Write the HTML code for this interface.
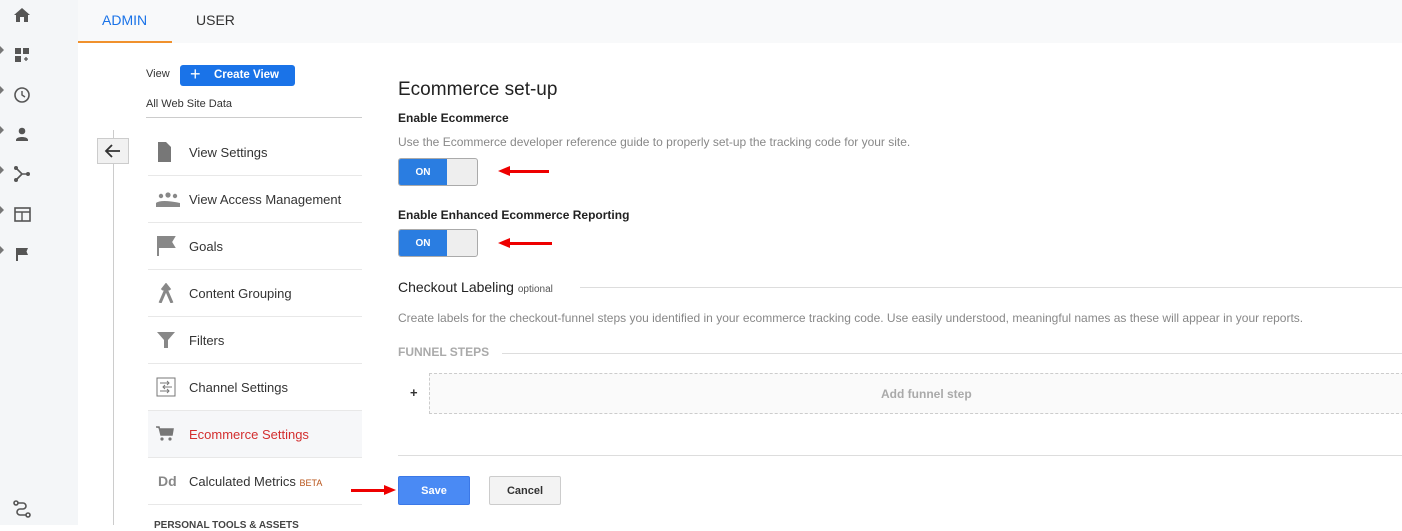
<!DOCTYPE html>
<html><head><meta charset="utf-8"><style>
*{margin:0;padding:0;box-sizing:border-box}
body{width:1402px;height:525px;overflow:hidden;background:#fff;font-family:"Liberation Sans",Arial,sans-serif;position:relative;color:#333}
.a{position:absolute}
.side{left:0;top:0;width:78px;height:525px;background:#f4f6f8}
.top{left:78px;top:0;width:1324px;height:43px;background:#f8f9fa}
.tab{top:12px;font-size:14px}
.item{left:148px;width:214px;height:47px;border-bottom:1px solid #e8e8e8;font-size:13px;color:#333}
.item span{position:absolute;left:41px;top:16px}
.item svg{position:absolute;left:8px;top:13px}
.tog{left:398px;width:80px;height:28px;border:1px solid #aaa;border-radius:3px;background:#eee;overflow:hidden}
.tog b{position:absolute;left:0;top:0;width:48px;height:28px;background:#2a7de1;color:#fff;font-size:10px;text-align:center;line-height:27px}
.arrow{height:3px;background:#e00}
.h{font-size:12px;font-weight:bold;color:#222}
.g{font-size:12px;color:#888}
</style></head><body>
<div class="a side"></div>
<svg class="a" style="left:12px;top:6px" width="20" height="260" fill="#555">
<path d="M10 2l8 7h-2v7h-4v-5H8v5H4V9H2z"/>
<rect x="3" y="42" width="6" height="6"/><rect x="11" y="42" width="6" height="6"/><rect x="3" y="50" width="6" height="6"/><path d="M12 53h4M14 51v4" stroke="#555" stroke-width="1.3"/>
<circle cx="10" cy="89" r="7" fill="none" stroke="#555" stroke-width="1.6"/><path d="M10 85v4l3 2" fill="none" stroke="#555" stroke-width="1.4"/>
<circle cx="10" cy="125" r="3.3"/><path d="M4 134c0-4 12-4 12 0v1H4z"/>
<path d="M4 162l6 6h6M4 174l6-6" fill="none" stroke="#555" stroke-width="1.6"/><circle cx="4" cy="162" r="2"/><circle cx="4" cy="174" r="2"/><circle cx="16" cy="168" r="2"/>
<rect x="3" y="202" width="15" height="13" fill="none" stroke="#555" stroke-width="1.6"/><path d="M3 206h15M10 206v9" stroke="#555" stroke-width="1.4"/>
<path d="M4 242h12l-1.5 3.5 1.5 3.5H6v6H4z"/>
</svg>
<svg class="a" style="left:0;top:46px" width="6" height="220" fill="#777"><path d="M0 0l4 4-4 4zM0 40l4 4-4 4zM0 80l4 4-4 4zM0 120l4 4-4 4zM0 160l4 4-4 4zM0 200l4 4-4 4z"/></svg>
<svg class="a" style="left:12px;top:499px" width="20" height="20" fill="none" stroke="#555" stroke-width="1.6"><circle cx="4" cy="4" r="2"/><circle cx="16" cy="16" r="2"/><path d="M6 4h5a3 3 0 010 6H8a3 3 0 000 6h6"/></svg>
<div class="a top"></div>
<div class="a tab" style="left:102px;color:#1a73e8">ADMIN</div>
<div class="a tab" style="left:196px;color:#333">USER</div>
<div class="a" style="left:78px;top:41px;width:94px;height:2px;background:#f0912d"></div>
<div class="a" style="left:146px;top:68px;font-size:11px">View</div>
<div class="a" style="left:180px;top:65px;width:115px;height:21px;background:#1a73e8;border-radius:3px;color:#fff;font-size:11.5px;font-weight:bold;line-height:21px"><span style="position:absolute;left:10px;top:-1px;font-size:18px;font-weight:normal">+</span><span style="position:absolute;left:34px">Create View</span></div>
<div class="a" style="left:146px;top:98px;font-size:11px">All Web Site Data</div>
<div class="a" style="left:146px;top:117px;width:216px;height:1px;background:#ccc"></div>
<div class="a" style="left:113px;top:130px;width:1px;height:395px;background:#ccc"></div>
<div class="a" style="left:97px;top:138px;width:32px;height:26px;background:#f1f1f1;border:1px solid #ccc"><svg width="30" height="24"><path d="M22 12H8M14 6l-6 6 6 6" fill="none" stroke="#333" stroke-width="1.8"/></svg></div>
<div class="a item" style="top:129px"><svg width="16" height="20"><path d="M2 0h8l5 5v15H2z" fill="#777"/></svg><span>View Settings</span></div>
<div class="a item" style="top:176px"><svg width="24" height="20"><g fill="#888"><circle cx="5" cy="7" r="2.2"/><circle cx="12" cy="6" r="2.6"/><circle cx="19" cy="7" r="2.2"/><path d="M0 14q5-4 24 0v4H0z"/></g></svg><span>View Access Management</span></div>
<div class="a item" style="top:223px"><svg width="20" height="20"><path d="M2 0v20M2 1h16l-3 5 3 5H2" fill="#888" stroke="#888" stroke-width="2"/></svg><span>Goals</span></div>
<div class="a item" style="top:270px"><svg width="20" height="20"><path d="M4 20l6-14 6 14M6 7l4-5 4 5" fill="none" stroke="#888" stroke-width="3"/></svg><span>Content Grouping</span></div>
<div class="a item" style="top:317px"><svg width="20" height="20"><path d="M1 2h18l-7 8v8h-4v-8z" fill="#888"/></svg><span>Filters</span></div>
<div class="a item" style="top:364px"><svg width="20" height="20"><rect x="1" y="1" width="18" height="18" fill="none" stroke="#777"/><path d="M4 6h9M11 4l2 2-2 2M16 10H7M9 8l-2 2 2 2M4 14h9M11 12l2 2-2 2" fill="none" stroke="#777"/></svg><span>Channel Settings</span></div>
<div class="a item" style="top:411px;background:#f6f7f9"><svg width="18" height="20"><path d="M0 3h3l2 8h11l1-6H4" fill="#777" stroke="#777" stroke-width="1.5"/><circle cx="6" cy="15" r="1.6" fill="#777"/><circle cx="14" cy="15" r="1.6" fill="#777"/></svg><span style="color:#d32f2f">Ecommerce Settings</span></div>
<div class="a item" style="top:458px"><span style="left:10px;font-weight:bold;color:#888;font-size:14px;top:15px">Dd</span><span>Calculated Metrics <i style="font-style:normal;color:#b8541a;font-size:9px">BETA</i></span></div>
<div class="a" style="left:154px;top:520px;font-size:10px;font-weight:bold;color:#444">PERSONAL TOOLS &amp; ASSETS</div>

<div class="a" style="left:398px;top:79px;font-size:19px;color:#222">Ecommerce set-up</div>
<div class="a h" style="left:398px;top:111px">Enable Ecommerce</div>
<div class="a g" style="left:398px;top:135px">Use the Ecommerce developer reference guide to properly set-up the tracking code for your site.</div>
<div class="a tog" style="top:158px"><b>ON</b></div>
<div class="a arrow" style="left:508px;top:170px;width:41px"></div><div class="a" style="left:498px;top:166px;width:0;height:0;border-top:5px solid transparent;border-bottom:5px solid transparent;border-right:12px solid #e00"></div>
<div class="a h" style="left:398px;top:208px">Enable Enhanced Ecommerce Reporting</div>
<div class="a tog" style="top:229px"><b>ON</b></div>
<div class="a arrow" style="left:510px;top:242px;width:42px"></div><div class="a" style="left:498px;top:238px;width:0;height:0;border-top:5px solid transparent;border-bottom:5px solid transparent;border-right:12px solid #e00"></div>
<div class="a" style="left:398px;top:279px;font-size:14px;color:#222">Checkout Labeling <span style="font-size:10px;color:#555">optional</span></div>
<div class="a" style="left:580px;top:287px;width:822px;height:1px;background:#ddd"></div>
<div class="a g" style="left:398px;top:311px">Create labels for the checkout-funnel steps you identified in your ecommerce tracking code. Use easily understood, meaningful names as these will appear in your reports.</div>
<div class="a" style="left:398px;top:345px;font-size:12px;font-weight:bold;color:#aaa">FUNNEL STEPS</div>
<div class="a" style="left:502px;top:353px;width:900px;height:1px;background:#ddd"></div>
<div class="a" style="left:410px;top:385px;font-size:13px;font-weight:bold">+</div>
<div class="a" style="left:429px;top:373px;width:980px;height:41px;border:1px dashed #ccc;background:#fafafa;font-size:12px;color:#aaa;font-weight:bold;padding-left:451px;line-height:41px">Add funnel step</div>
<div class="a" style="left:398px;top:455px;width:1004px;height:1px;background:#ddd"></div>
<div class="a" style="left:398px;top:476px;width:72px;height:29px;background:#4a8af4;border:1px solid #3b78e7;border-radius:2px;color:#fff;font-size:11px;font-weight:bold;text-align:center;line-height:28px">Save</div>
<div class="a" style="left:489px;top:476px;width:72px;height:29px;background:#f3f3f3;border:1px solid #ccc;border-radius:2px;color:#333;font-size:11px;font-weight:bold;text-align:center;line-height:28px">Cancel</div>
<div class="a arrow" style="left:351px;top:489px;width:40px"></div><div class="a" style="left:384px;top:485px;width:0;height:0;border-top:5px solid transparent;border-bottom:5px solid transparent;border-left:12px solid #e00"></div>
</body></html>
